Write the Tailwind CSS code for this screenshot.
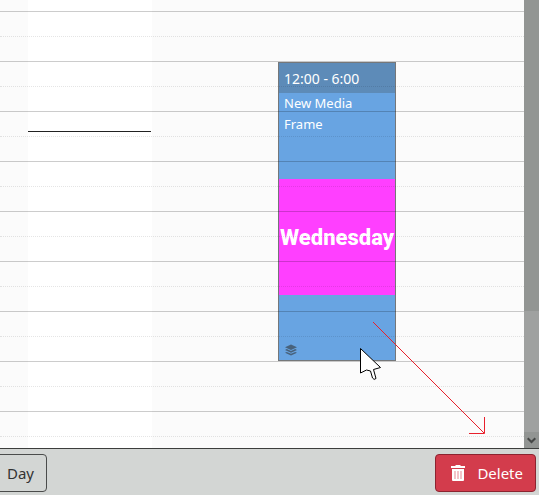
<!DOCTYPE html>
<html lang="en">
<head>
    <meta charset="UTF-8">
    <meta name="viewport" content="width=device-width, initial-scale=1.0">
    <title>Schedule</title>
    <script src="https://cdn.jsdelivr.net/npm/@tailwindcss/browser@4"></script>
</head>
<body class="h-screen flex flex-col overflow-hidden bg-[#d3d6d4] font-['Noto_Sans','Open_Sans',sans-serif] text-[#333]">
    <!-- Calendar -->
    <main class="flex-1 min-h-0 flex border-b border-[#3c3e3d]">
        <div class="relative flex-1 min-w-0 overflow-hidden bg-[#fbfbfb]">
            <!-- Day columns -->
            <div class="h-full flex">
                <div class="w-7 shrink-0"></div>
                <div class="w-31 shrink-0 bg-white pt-[131px]">
                    <div class="h-px mr-px bg-[#222]"></div>
                </div>
                <div class="w-31 shrink-0"></div>
                <div class="w-31 shrink-0 pt-[62px] pl-0.5 pr-1">
                    <article class="h-[299px] flex flex-col border border-[#757779] bg-[#68a4e2] text-white">
                        <header class="h-[30px] shrink-0 px-[5px] pt-1.5 text-sm leading-5 bg-[#5d8bb8]">12:00 - 6:00</header>
                        <p class="h-[86px] shrink-0 px-[5px] text-[13px] leading-[21px]">New Media<br>Frame</p>
                        <div class="h-[116px] shrink-0 flex items-center justify-center bg-[#ff3fff] font-['Roboto',sans-serif] font-extrabold text-[22px]">Wednesday</div>
                        <div class="flex-1 flex items-end px-[6px] pb-1">
                            <svg class="w-3 h-3" viewBox="0 0 12 12" fill="#48627c">
                                <path d="M6 0.5L12 3.2L6 6L0 3.2Z"/>
                                <path d="M0 6L1.8 5.1L6 7L10.2 5.1L12 6L6 8.7Z"/>
                                <path d="M0 8.7L1.8 7.9L6 9.8L10.2 7.9L12 8.7L6 11.5Z"/>
                            </svg>
                        </div>
                    </article>
                </div>
            </div>
            <!-- Half-hour lines -->
            <div class="absolute inset-0 pointer-events-none">
                <div class="h-3 border-b border-black/20"></div>
                <div class="h-[25px] border-b border-dotted border-black/10"></div>
                <div class="h-[25px] border-b border-black/20"></div>
                <div class="h-[25px] border-b border-dotted border-black/10"></div>
                <div class="h-[25px] border-b border-black/20"></div>
                <div class="h-[25px] border-b border-dotted border-black/10"></div>
                <div class="h-[25px] border-b border-black/20"></div>
                <div class="h-[25px] border-b border-dotted border-black/10"></div>
                <div class="h-[25px] border-b border-black/20"></div>
                <div class="h-[25px] border-b border-dotted border-black/10"></div>
                <div class="h-[25px] border-b border-black/20"></div>
                <div class="h-[25px] border-b border-dotted border-black/10"></div>
                <div class="h-[25px] border-b border-black/20"></div>
                <div class="h-[25px] border-b border-dotted border-black/10"></div>
                <div class="h-[25px] border-b border-black/20"></div>
                <div class="h-[25px] border-b border-dotted border-black/10"></div>
                <div class="h-[25px] border-b border-black/20"></div>
                <div class="h-[25px] border-b border-dotted border-black/10"></div>
            </div>
            <!-- Drag arrow and pointer -->
            <svg class="absolute left-[360px] top-[321px] w-[130px] h-[115px] pointer-events-none" viewBox="0 0 130 115" fill="none">
                <path d="M13 1L124 112" stroke="#e8202c" shape-rendering="crispEdges"/>
                <path d="M124.5 96V112.5H109" stroke="#e8202c"/>
                <path d="M0.5 27.5V52L6.5 49L10.5 50L12.5 57Q14 59.5 16 57.5L13.5 48.5L20.5 46.5Z" fill="#fff" stroke="#000"/>
            </svg>
        </div>
        <!-- Scrollbar -->
        <div class="w-[15px] shrink-0 flex flex-col bg-[#929593]">
            <div class="h-[311px] shrink-0"></div>
            <div class="flex-1 bg-[#9fa1a0]"></div>
            <div class="h-4 shrink-0 flex items-center justify-center">
                <svg class="w-[9px] h-[7px]" viewBox="0 0 9 7" fill="none" stroke="#454746" stroke-width="2">
                    <path d="M0.7 1.2L4.5 5L8.3 1.2"/>
                </svg>
            </div>
        </div>
    </main>

    <!-- Toolbar -->
    <footer class="shrink-0 flex justify-between pt-[5px] pb-[3px] pr-[3px] text-[15px] leading-6">
        <button class="h-[38px] -ml-1.5 pl-3 pr-3 border border-[#4a4c4b] rounded">Day</button>
        <button class="h-[38px] w-[101px] flex items-center justify-between pl-[15px] pr-3 border border-[#8c2430] rounded bg-[#d33c4c] text-white">
            <svg class="w-[14px] h-4" viewBox="0 0 14 16">
                <path d="M4.5 0H9.5V1H14V3H0V1H4.5Z" fill="#fff"/>
                <path d="M1 4H13V15Q13 16 12 16H2Q1 16 1 15Z" fill="#fff"/>
                <path d="M3 6H5V14H3ZM6 6H8V14H6ZM9 6H11V14H9Z" fill="#f3c3c9"/>
            </svg>
            Delete
        </button>
    </footer>
</body>
</html>
